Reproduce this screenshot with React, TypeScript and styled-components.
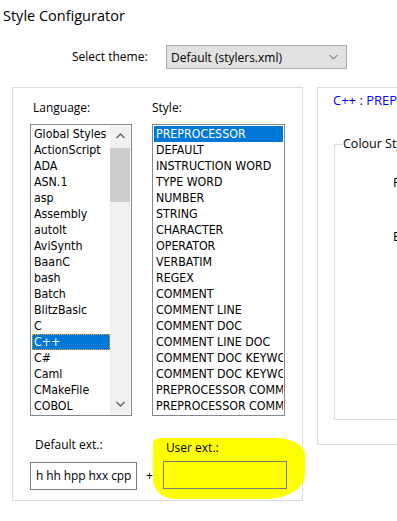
import React from 'react';
import styled, { createGlobalStyle } from 'styled-components';

const GlobalStyle = createGlobalStyle`
  html, body {
    margin: 0;
    padding: 0;
    background: #fff;
  }
`;

const languages = [
  'Global Styles', 'ActionScript', 'ADA', 'ASN.1', 'asp', 'Assembly', 'autoIt',
  'AviSynth', 'BaanC', 'bash', 'Batch', 'BlitzBasic', 'C', 'C++', 'C#', 'Caml',
  'CMakeFile', 'COBOL',
];

const styles = [
  'PREPROCESSOR', 'DEFAULT', 'INSTRUCTION WORD', 'TYPE WORD', 'NUMBER', 'STRING',
  'CHARACTER', 'OPERATOR', 'VERBATIM', 'REGEX', 'COMMENT', 'COMMENT LINE',
  'COMMENT DOC', 'COMMENT LINE DOC', 'COMMENT DOC KEYWORD', 'COMMENT DOC KEYWORD ERROR',
  'PREPROCESSOR COMMENT', 'PREPROCESSOR COMMENT DOC',
];

const Window = styled.div`
  width: 397px;
  height: 521px;
  overflow: hidden;
  font-family: 'Segoe UI', 'Open Sans', 'Noto Sans', sans-serif;
  font-size: 12px;
  color: #000;
  display: flex;
  flex-direction: column;
`;

const Title = styled.div`
  font-size: 14.5px;
  line-height: 20px;
  margin: 6px 0 0 3px;
`;

const ThemeRow = styled.div`
  display: flex;
  align-items: center;
  margin-top: 19px;
  padding-left: 72px;
`;

const ThemeLabel = styled.span`
  width: 94px;
  line-height: 16px;
`;

const Select = styled.div`
  box-sizing: border-box;
  width: 181px;
  height: 24px;
  background: #e1e1e1;
  border: 1px solid #adadad;
  display: flex;
  align-items: center;
  justify-content: space-between;
  padding: 0 8px 0 4px;
`;

const MainRow = styled.div`
  display: flex;
  gap: 14px;
  margin-top: 18px;
  padding-left: 12px;
`;

const LeftGroup = styled.div`
  box-sizing: border-box;
  flex: none;
  width: 291px;
  height: 414px;
  border: 1px solid #dcdcdc;
  padding: 12px 0 0 17px;
  display: flex;
  flex-direction: column;
`;

const ListsRow = styled.div`
  display: flex;
  gap: 20px;
`;

const Column = styled.div`
  display: flex;
  flex-direction: column;
`;

const FieldLabel = styled.div<{ $indent?: number }>`
  line-height: 16px;
  margin-left: ${({ $indent }) => $indent ?? 3}px;
  margin-bottom: 8px;
`;

const ListBox = styled.div<{ $width: number }>`
  box-sizing: border-box;
  width: ${({ $width }) => $width}px;
  height: 292px;
  border: 1px solid #828790;
  padding: 1px;
  display: flex;
  overflow: hidden;
`;

const Items = styled.div`
  flex: 1;
  min-width: 0;
  display: flex;
  flex-direction: column;
`;

const Item = styled.div<{ $selected?: boolean; $focus?: boolean }>`
  box-sizing: border-box;
  height: 16px;
  line-height: 16px;
  padding-left: 2px;
  font-family: 'DejaVu Sans Condensed', 'DejaVu Sans', sans-serif;
  font-size: 12.3px;
  white-space: nowrap;
  overflow: hidden;
  background: ${({ $selected }) => ($selected ? '#0078d7' : 'transparent')};
  color: ${({ $selected }) => ($selected ? '#fff' : '#000')};
  outline: ${({ $focus }) => ($focus ? '1px dotted #f0a030' : 'none')};
  outline-offset: -1px;
`;

const ScrollBar = styled.div`
  flex: none;
  width: 20px;
  background: #f0f0f0;
  display: flex;
  flex-direction: column;
`;

const ScrollButton = styled.div`
  height: 20px;
  display: flex;
  align-items: center;
  justify-content: center;
`;

const Thumb = styled.div`
  height: 54px;
  margin-top: 2px;
  background: #cdcdcd;
`;

const Track = styled.div`
  flex: 1;
`;

const ExtRow = styled.div`
  display: flex;
  align-items: flex-start;
  margin-top: 21px;
`;

const ExtLabel = styled.div<{ $gap: number; $indent: number }>`
  line-height: 16px;
  margin-left: ${({ $indent }) => $indent}px;
  margin-bottom: ${({ $gap }) => $gap}px;
`;

const TextInput = styled.div<{ $width: number }>`
  box-sizing: border-box;
  width: ${({ $width }) => $width}px;
  height: 28px;
  border: 1px solid #7a7a7a;
  padding-left: 5px;
  line-height: 26px;
  font-size: 12px;
  letter-spacing: -0.1px;
  white-space: nowrap;
  overflow: hidden;
`;

const Plus = styled.div`
  width: 16px;
  box-sizing: border-box;
  padding-left: 9px;
  margin-top: 25px;
  line-height: 28px;
  font-size: 12px;
`;

const Highlight = styled.div`
  display: flex;
  flex-direction: column;
  width: 152px;
  box-sizing: border-box;
  margin-top: 1px;
  padding: 2px 18px 10px 10px;
  background: #ffff00;
  border-radius: 10px 30px 40px 22px / 4px 16px 24px 20px;
`;

const RightPanel = styled.div`
  box-sizing: border-box;
  flex: none;
  width: 120px;
  height: 358px;
  border: 1px solid #dcdcdc;
  padding: 4px 0 0 15px;
  display: flex;
  flex-direction: column;
`;

const StyleName = styled.div`
  color: #0000ff;
  font-size: 13px;
  line-height: 16px;
  white-space: nowrap;
`;

const ColourGroup = styled.fieldset`
  box-sizing: border-box;
  margin: 28px 0 0 1px;
  padding: 0 0 0 7px;
  height: 284px;
  border: 1px solid #dcdcdc;
  border-right: none;
  min-width: 0;
`;

const Legend = styled.legend`
  padding: 0 1px;
  font-size: 12.5px;
  line-height: 16px;
  white-space: nowrap;
`;

const ColourLabel = styled.div<{ $top: number }>`
  margin-top: ${({ $top }) => $top}px;
  padding-left: 51px;
  font-size: 12.5px;
  line-height: 16px;
  white-space: nowrap;
`;

function Chevron({ up }: { up?: boolean }) {
  return (
    <svg width="9" height="6" viewBox="0 0 9 6">
      <polyline
        points={up ? '0.5,5 4.5,1 8.5,5' : '0.5,1 4.5,5 8.5,1'}
        fill="none"
        stroke="#606060"
        strokeWidth="1.4"
      />
    </svg>
  );
}

export default function App() {
  return (
    <Window>
      <GlobalStyle />
      <Title>Style Configurator</Title>
      <ThemeRow>
        <ThemeLabel>Select theme:</ThemeLabel>
        <Select>
          <span>Default (stylers.xml)</span>
          <svg width="9" height="6" viewBox="0 0 9 6">
            <polyline points="0.5,1 4.5,5 8.5,1" fill="none" stroke="#555" strokeWidth="1" />
          </svg>
        </Select>
      </ThemeRow>
      <MainRow>
        <LeftGroup>
          <ListsRow>
            <Column>
              <FieldLabel>Language:</FieldLabel>
              <ListBox $width={102}>
                <Items>
                  {languages.map((l) => (
                    <Item key={l} $selected={l === 'C++'} $focus={l === 'C++'}>
                      {l}
                    </Item>
                  ))}
                </Items>
                <ScrollBar>
                  <ScrollButton>
                    <Chevron up />
                  </ScrollButton>
                  <Thumb />
                  <Track />
                  <ScrollButton>
                    <Chevron />
                  </ScrollButton>
                </ScrollBar>
              </ListBox>
            </Column>
            <Column>
              <FieldLabel $indent={0}>Style:</FieldLabel>
              <ListBox $width={133}>
                <Items>
                  {styles.map((s, i) => (
                    <Item key={s} $selected={i === 0}>
                      {s}
                    </Item>
                  ))}
                </Items>
              </ListBox>
            </Column>
          </ListsRow>
          <ExtRow>
            <Column>
              <ExtLabel $indent={5} $gap={9}>Default ext.:</ExtLabel>
              <TextInput $width={107}>h hh hpp hxx cpp</TextInput>
            </Column>
            <Plus>+</Plus>
            <Highlight>
              <ExtLabel $indent={3} $gap={5}>User ext.:</ExtLabel>
              <TextInput $width={124} />
            </Highlight>
          </ExtRow>
        </LeftGroup>
        <RightPanel>
          <StyleName>C++ : PREPROCESSOR</StyleName>
          <ColourGroup>
            <Legend>Colour Style</Legend>
            <ColourLabel $top={23}>Foreground colour</ColourLabel>
            <ColourLabel $top={38}>Background colour</ColourLabel>
          </ColourGroup>
        </RightPanel>
      </MainRow>
    </Window>
  );
}
